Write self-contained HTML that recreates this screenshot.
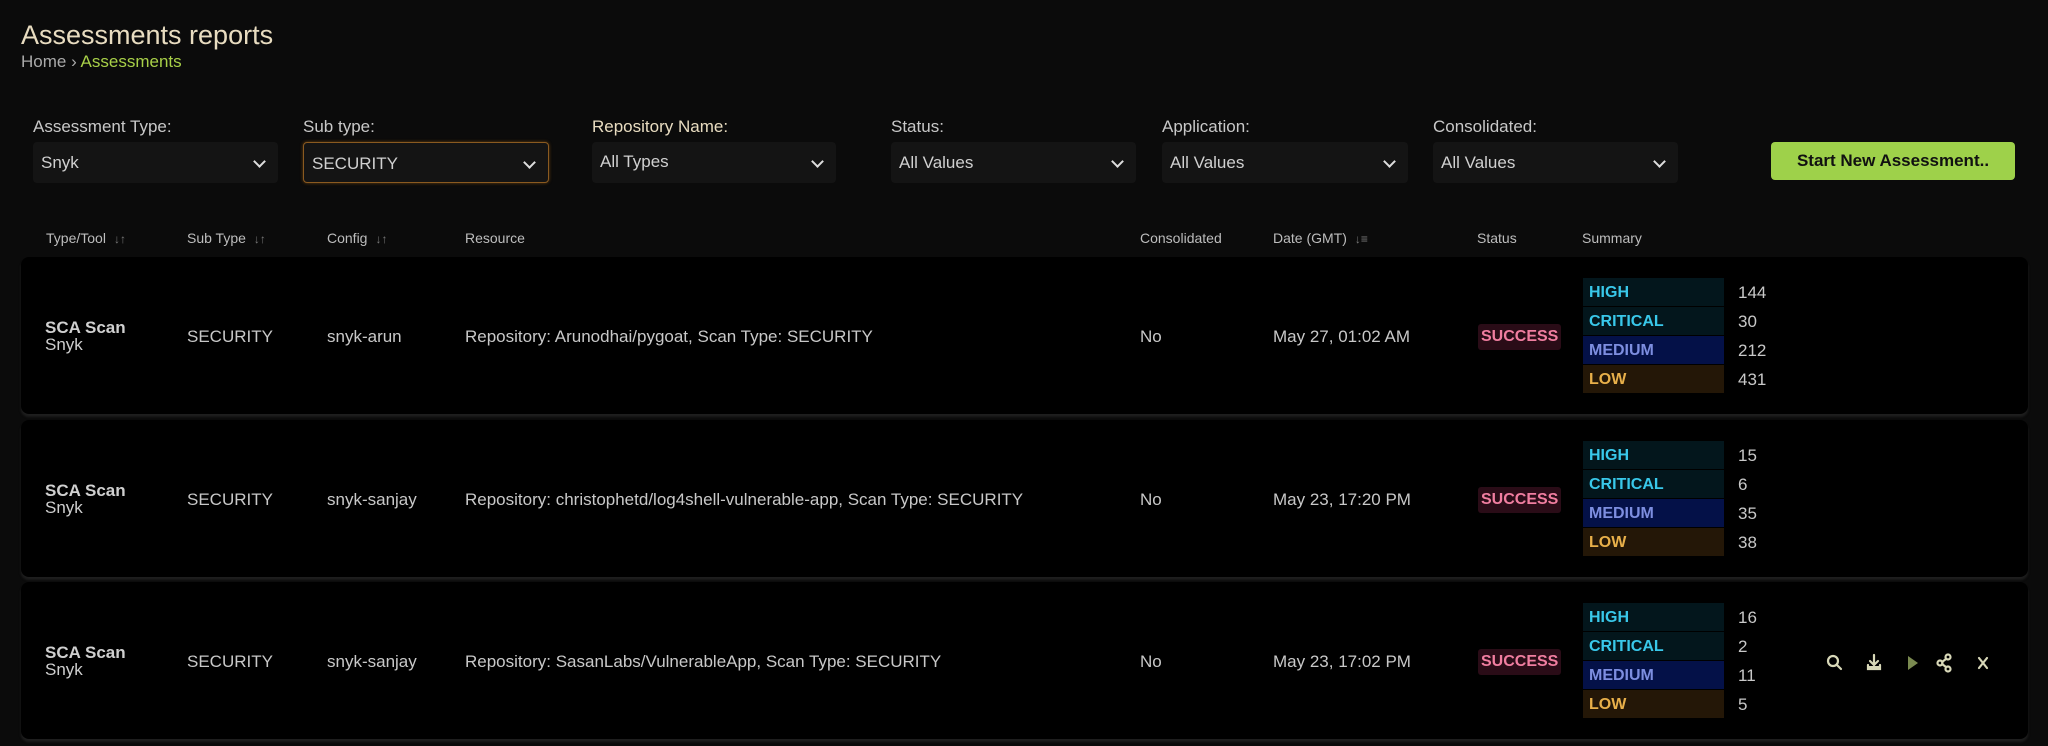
<!DOCTYPE html>
<html><head><style>
*{box-sizing:border-box;margin:0;padding:0}
body{width:2048px;height:746px;background:#0b0b0b;font-family:"Liberation Sans",sans-serif;color:#c9c9c9;position:relative;overflow:hidden}
.abs{position:absolute}
h1{position:absolute;left:21px;top:20px;font-size:27px;font-weight:normal;color:#e8dcc0}
.bc{position:absolute;left:21px;top:52px;font-size:17px;color:#aaa}
.bc span{color:#a8d048}
.lbl{position:absolute;top:117px;font-size:17px;color:#c8c8c8}
.sel{position:absolute;top:142px;height:41px;background:#141414;border-radius:4px;font-size:17px;color:#d0d0d0;padding:11px 8px}
.sel:after{content:"";position:absolute;right:14px;top:15px;width:7px;height:7px;border-right:2px solid #ddd;border-bottom:2px solid #ddd;transform:rotate(45deg)}
.btn{position:absolute;left:1771px;top:142px;width:244px;height:38px;background:#9ed14a;border-radius:4px;color:#111;font-weight:bold;font-size:17px;text-align:center;line-height:38px}
.th{position:absolute;top:230px;font-size:14px;color:#bdbdbd}
.th i{font-style:normal;color:#777;font-size:12px;margin-left:8px}
.row{position:absolute;left:21px;width:2007px;height:157px;background:#000;border-radius:8px;box-shadow:0 3px 2px #1e1e1e}
.c{position:absolute;font-size:17px;color:#c8c8c8}
.tt{font-weight:bold;color:#cfcfcf;line-height:17px}
.succ{position:absolute;left:1457px;background:#2a0c17;color:#f07ea0;font-weight:bold;font-size:16px;padding:4px 3px;border-radius:3px}
.chip{position:absolute;left:1562px;width:141px;height:28px;font-weight:bold;font-size:16px;padding:6px 6px}
.n{position:absolute;left:1717px;font-size:17px;color:#c8c8c8}
.h{background:#03161c;color:#39c8ea}
.m{background:#041148;color:#7d8ee0}
.l{background:#241707;color:#e8b04a}
</style></head><body>
<h1>Assessments reports</h1>
<div class="bc">Home › <span>Assessments</span></div>

<div class="lbl" style="left:33px">Assessment Type:</div>
<div class="lbl" style="left:303px">Sub type:</div>
<div class="lbl" style="left:592px;color:#e8dcc0">Repository Name:</div>
<div class="lbl" style="left:891px">Status:</div>
<div class="lbl" style="left:1162px">Application:</div>
<div class="lbl" style="left:1433px">Consolidated:</div>
<div class="sel" style="left:33px;width:245px">Snyk</div>
<div class="sel" style="left:303px;width:246px;border:1px solid #8a5a20;box-shadow:0 0 3px #6a4010">SECURITY</div>
<div class="sel" style="left:592px;width:244px;padding-top:10px">All Types</div>
<div class="sel" style="left:891px;width:245px">All Values</div>
<div class="sel" style="left:1162px;width:246px">All Values</div>
<div class="sel" style="left:1433px;width:245px">All Values</div>
<div class="btn">Start New Assessment..</div>

<div class="th" style="left:46px">Type/Tool<i>↓↑</i></div>
<div class="th" style="left:187px">Sub Type<i>↓↑</i></div>
<div class="th" style="left:327px">Config<i>↓↑</i></div>
<div class="th" style="left:465px">Resource</div>
<div class="th" style="left:1140px">Consolidated</div>
<div class="th" style="left:1273px">Date (GMT)<i>↓≡</i></div>
<div class="th" style="left:1477px">Status</div>
<div class="th" style="left:1582px">Summary</div>

<div class="row" style="top:257px">
 <div class="c tt" style="left:24px;top:62px">SCA Scan<br><span style="font-weight:normal">Snyk</span></div>
 <div class="c" style="left:166px;top:70px">SECURITY</div>
 <div class="c" style="left:306px;top:70px">snyk-arun</div>
 <div class="c" style="left:444px;top:70px">Repository: Arunodhai/pygoat, Scan Type: SECURITY</div>
 <div class="c" style="left:1119px;top:70px">No</div>
 <div class="c" style="left:1252px;top:70px">May 27, 01:02 AM</div>
 <div class="succ" style="top:67px">SUCCESS</div>
 <div class="chip h" style="top:21px">HIGH</div><div class="n" style="top:26px">144</div>
 <div class="chip h" style="top:50px">CRITICAL</div><div class="n" style="top:55px">30</div>
 <div class="chip m" style="top:79px">MEDIUM</div><div class="n" style="top:84px">212</div>
 <div class="chip l" style="top:108px">LOW</div><div class="n" style="top:113px">431</div>
</div>
<div class="row" style="top:420px">
 <div class="c tt" style="left:24px;top:62px">SCA Scan<br><span style="font-weight:normal">Snyk</span></div>
 <div class="c" style="left:166px;top:70px">SECURITY</div>
 <div class="c" style="left:306px;top:70px">snyk-sanjay</div>
 <div class="c" style="left:444px;top:70px">Repository: christophetd/log4shell-vulnerable-app, Scan Type: SECURITY</div>
 <div class="c" style="left:1119px;top:70px">No</div>
 <div class="c" style="left:1252px;top:70px">May 23, 17:20 PM</div>
 <div class="succ" style="top:67px">SUCCESS</div>
 <div class="chip h" style="top:21px">HIGH</div><div class="n" style="top:26px">15</div>
 <div class="chip h" style="top:50px">CRITICAL</div><div class="n" style="top:55px">6</div>
 <div class="chip m" style="top:79px">MEDIUM</div><div class="n" style="top:84px">35</div>
 <div class="chip l" style="top:108px">LOW</div><div class="n" style="top:113px">38</div>
</div>
<div class="row" style="top:582px">
 <div class="c tt" style="left:24px;top:62px">SCA Scan<br><span style="font-weight:normal">Snyk</span></div>
 <div class="c" style="left:166px;top:70px">SECURITY</div>
 <div class="c" style="left:306px;top:70px">snyk-sanjay</div>
 <div class="c" style="left:444px;top:70px">Repository: SasanLabs/VulnerableApp, Scan Type: SECURITY</div>
 <div class="c" style="left:1119px;top:70px">No</div>
 <div class="c" style="left:1252px;top:70px">May 23, 17:02 PM</div>
 <div class="succ" style="top:67px">SUCCESS</div>
 <div class="chip h" style="top:21px">HIGH</div><div class="n" style="top:26px">16</div>
 <div class="chip h" style="top:50px">CRITICAL</div><div class="n" style="top:55px">2</div>
 <div class="chip m" style="top:79px">MEDIUM</div><div class="n" style="top:84px">11</div>
 <div class="chip l" style="top:108px">LOW</div><div class="n" style="top:113px">5</div>
 <svg class="abs" style="left:1805px;top:71px" width="180" height="20" viewBox="0 0 180 20" fill="none" stroke="#d8d8b8" stroke-width="2.2" stroke-linecap="round">
  <circle cx="7" cy="8" r="5"/><path d="M11 12l4 4"/>
  <path d="M48 2v10M44 8l4 4 4-4M42 12v4h12v-4" /><rect x="42" y="13" width="12" height="4" fill="#d8d8b8" stroke="none"/>
  <path d="M82 3l10 7-10 7z" fill="#7a8a50" stroke="none"/>
  <circle cx="122" cy="4" r="2.5"/><circle cx="114" cy="10" r="2.5"/><circle cx="122" cy="16" r="2.5"/><path d="M116 9l4-3M116 11l4 3"/>
  <path d="M153 5l8 10M161 5l-8 10"/>
 </svg>
</div>
</body></html>
